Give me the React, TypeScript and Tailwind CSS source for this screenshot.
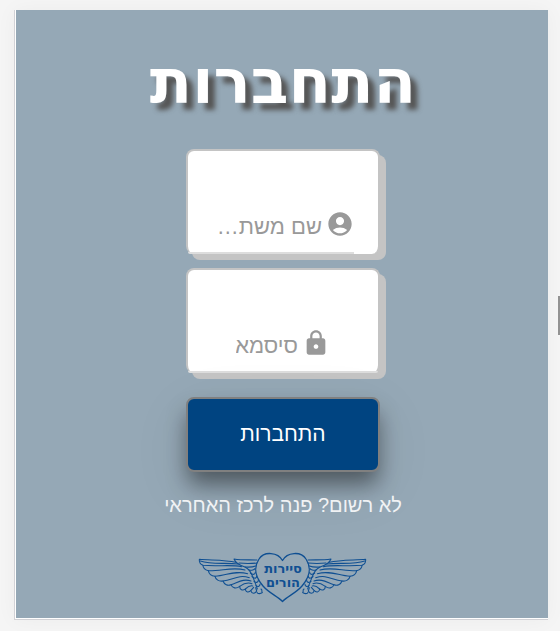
import type { ReactNode } from 'react';
import { MdAccountCircle, MdLock } from 'react-icons/md';

type FieldProps = {
  id: string;
  label: string;
  type: string;
  placeholder: string;
  inputWidth: string;
  underline: string;
  icon: ReactNode;
};

function Field({ id, label, type, placeholder, inputWidth, underline, icon }: FieldProps) {
  return (
    <div className="flex h-[105px] w-[194px] flex-col justify-end rounded-lg border-2 border-b-0 border-[#c4c4c4] bg-white shadow-[6px_6px_0_#c4c4c4]">
      <div className="flex items-center justify-center gap-1 pb-3">
        <label htmlFor={id} aria-label={label} className="text-[#999]">
          {icon}
        </label>
        <input
          id={id}
          type={type}
          placeholder={placeholder}
          className={`${inputWidth} h-8 bg-transparent pt-1 text-[22px] text-[#555] outline-none placeholder:text-[#999]`}
        />
      </div>
      <div className={`${underline} h-[2px] self-end rounded-bl-lg bg-[#ddd]`} />
    </div>
  );
}

const feathers = [
  'M122 52 C90 44 50 46 13 43 C12 52 16 58 24 61 C70 65 110 58 140 65',
  'M16 48 C50 60 90 52 130 57',
  'M24 61 C24 70 30 75 40 77 C80 78 115 65 150 75',
  'M40 77 C42 88 50 93 60 94 C95 92 120 75 158 86',
  'M60 94 C62 104 72 110 84 108 C115 104 130 88 163 98',
  'M84 108 C88 119 98 123 108 119 C130 112 145 100 168 108',
  'M108 119 C112 130 124 132 134 124 C148 114 158 111 171 116',
  'M134 124 C134 135 143 138 151 132 C161 123 166 121 173 123',
  'M151 132 C152 143 162 143 168 136 L176 127',
  'M168 138 C170 147 180 147 185 138 L182 128',
  'M186 142 C188 148 198 146 202 143 C198 138 204 136 198 132',
  'M186 45 C160 44 142 46 117 42 C122 54 136 62 150 66 C168 74 166 84 173 94 C178 108 182 116 187 132',
  'M132 54 C152 56 166 56 186 54',
  'M150 66 C162 67 174 66 182 63',
  'M160 74 C170 78 178 74 180 71',
  'M166 84 C174 91 181 88 181 82',
  'M171 95 C180 103 185 99 185 94',
  'M177 109 C185 115 190 111 190 106',
  'M183 122 C190 127 195 123 195 118',
];

function Wing() {
  return (
    <g transform="translate(-3 -7) scale(0.3333)">
      {feathers.map((d) => (
        <path key={d} d={d} />
      ))}
    </g>
  );
}

function Logo() {
  return (
    <svg width="170" height="60" viewBox="0 0 170 60" role="img" aria-label="סיירות הורים">
      <g fill="none" stroke="#0f4f92" strokeLinecap="round" strokeLinejoin="round">
        <g strokeWidth="3.2"><Wing /></g>
        <g strokeWidth="3.2" transform="translate(169 0) scale(-1 1)"><Wing /></g>
        <path strokeWidth="1.3" d="M84.5 8.5 C80 0 66 -1 61 7 C55 16 58 26 65 34 C71 41 79 44 84.5 49.5 C90 44 98 41 104 34 C111 26 114 16 108 7 C103 -1 89 0 84.5 8.5Z" />
      </g>
      <g fill="#0f4f92" textAnchor="middle" className="font-['DejaVu_Sans',sans-serif] text-[13px] font-bold">
        <text x="85" y="21">סיירות</text>
        <text x="85" y="35">הורים</text>
      </g>
    </svg>
  );
}

export default function App() {
  return (
    <div dir="rtl" className="relative min-h-screen bg-[#f5f5f5] pt-[10px] pr-3 pb-[11px] pl-[14px] font-['Liberation_Sans',Arial,sans-serif]">
      <main className="border-b border-l border-[#d2d2d6] shadow-[0_0_20px_#0000000a]">
        <div className="border-b border-l border-white">
          <div className="flex flex-col items-center bg-[#95a8b6] pb-1.5 pl-[2px]">
            <h1 className="mt-6 font-['DejaVu_Sans',sans-serif] text-[62px] leading-[96px] font-bold text-white [text-shadow:7px_7px_5px_#555]">
              התחברות
            </h1>
            <form className="mt-[19px] flex flex-col items-center" onSubmit={(e) => e.preventDefault()}>
              <div className="flex flex-col gap-[14px]">
                <Field
                  id="username"
                  label="שם משתמש"
                  type="text"
                  placeholder="שם משת…"
                  inputWidth="w-[110px]"
                  underline="mr-6 w-[166px]"
                  icon={<MdAccountCircle size={28} />}
                />
                <Field
                  id="password"
                  label="סיסמא"
                  type="password"
                  placeholder="סיסמא"
                  inputWidth="w-[62px]"
                  underline="w-full rounded-br-lg"
                  icon={<MdLock size={28} />}
                />
              </div>
              <button
                type="submit"
                className="mt-6 h-[75px] w-[194px] rounded-lg border-2 border-[#808080] bg-[#004481] pb-0.5 text-[21px] text-white shadow-[0_14px_22px_-2px_#00000073,0_16px_60px_#00000014]"
              >
                התחברות
              </button>
            </form>
            <p className="relative mt-[19px] text-xl leading-7 text-[#f0f2f4]">לא רשום? פנה לרכז האחראי</p>
            <div className="mt-[33px]">
              <Logo />
            </div>
          </div>
        </div>
      </main>
      <div className="absolute top-[296px] right-0 h-[39px] w-[2px] bg-[#929292]" />
    </div>
  );
}
